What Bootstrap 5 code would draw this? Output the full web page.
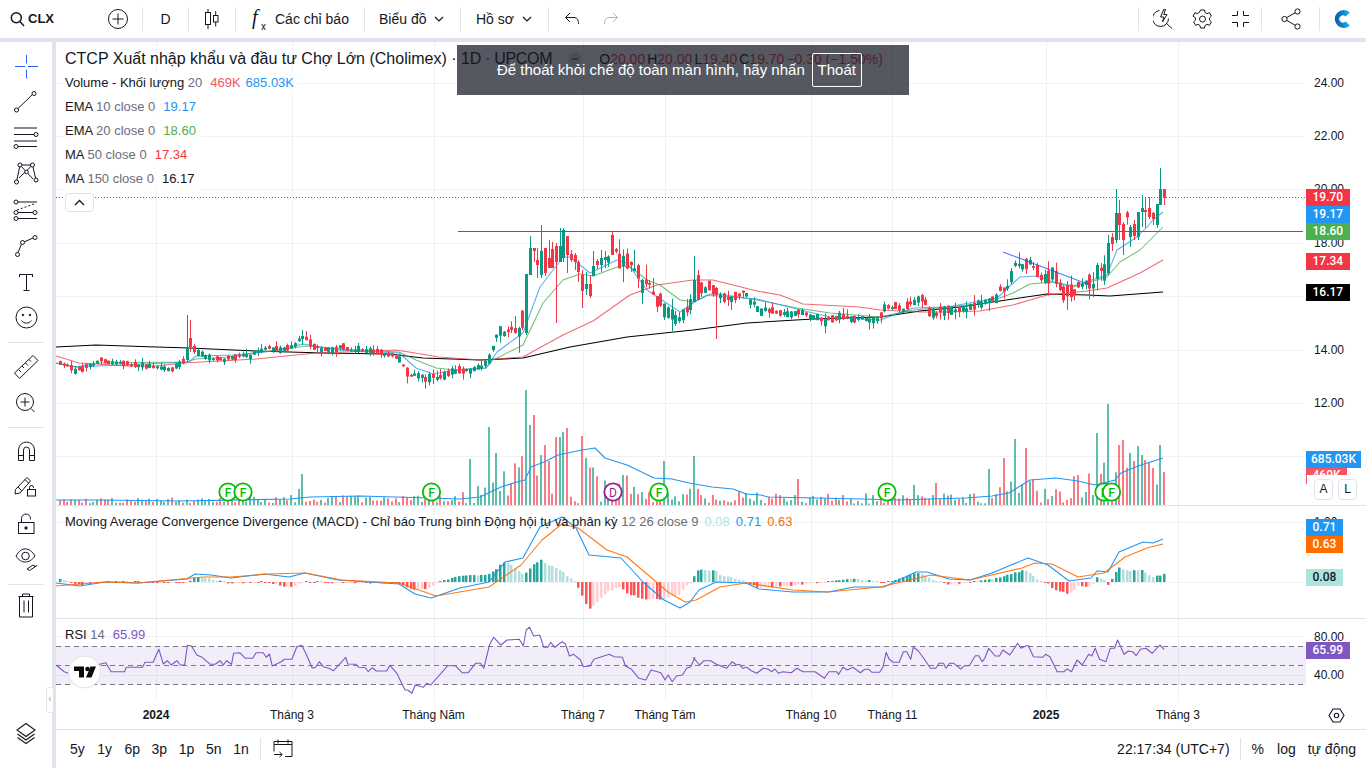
<!DOCTYPE html>
<html lang="vi">
<head>
<meta charset="utf-8">
<title>CLX</title>
<link href="https://cdn.jsdelivr.net/npm/bootstrap@5.3.0/dist/css/bootstrap.min.css" rel="stylesheet">
<style>
html,body{height:100%;margin:0;overflow:hidden;background:#E0E3EB;font-family:"Liberation Sans",Arial,sans-serif;color:#131722}
.topbar{height:38px;margin-bottom:4px;background:#fff;font-size:14px}
.tb-slot{height:38px;flex:none}
.tb-sep{width:1px;height:24px;background:#E0E3EB;flex:none}
.tb-sym{width:96px;padding-left:10px;gap:3px;font-weight:700;font-size:13px}
.tb-spacer{flex:1 1 auto}
.lefttools{width:52px;margin-right:4px;background:#fff;position:relative;flex:none;height:726px}
.lefttools svg{display:block;width:52px;height:726px}
.collapse-tab{position:absolute;left:46px;top:645px;width:8px;height:26px;background:#fff;border:1px solid #E0E3EB;border-radius:3px;font-size:10px;line-height:22px;text-align:center;color:#9598A1;overflow:hidden;z-index:3}
.workspace{width:1310px;flex:none;background:#fff;height:726px}
.pane{position:relative;width:1310px;display:flex}
.pane-main{height:463px}
.pane-macd{height:112px}
.pane-rsi{height:82px}
.rule{height:1px;background:#E0E3EB}
.plot{position:relative;width:1250px;flex:none;height:100%;overflow:hidden}
.plot>svg{display:block;position:absolute;left:0;top:0}
.axisbar{position:relative;width:60px;flex:none;height:100%;overflow:hidden;font-size:12px}
.axis-num{position:absolute;left:8px;line-height:16px;color:#131722}
.axis-tag{position:absolute;left:0;height:17px;line-height:17px;padding:0 6.5px;color:#fff;font-family:Roboto,sans-serif;font-weight:500;white-space:nowrap}
.axis-clip{height:8px;overflow:hidden;line-height:17px}
.legend-box{position:absolute;left:0;top:4px;padding-left:9px;font-size:13px;z-index:2}
.legend-row{height:24px;line-height:24px;white-space:nowrap;width:fit-content;padding-right:5px;background:rgba(255,255,255,.8);display:flex;gap:8px}
.legend-row .gr{color:#6A6D78}
.legend-tight{margin-left:-3px}
.legend-title{height:25px;font-size:16px;background:none;color:#131722;gap:0;align-items:center}
.title-tail{letter-spacing:-.3px}
.ohlc{font-size:14px;color:#131722;gap:0;display:inline-flex}
.ohlc b{font-weight:400;color:#F23645;margin-right:2px}
.ohlc-dot{width:14px;height:14px;border-radius:50%;background:#DADCE2;margin:0 17px 0 16px;flex:none;display:flex;align-items:center;justify-content:center}
.ohlc-dot::after{content:"";width:6px;height:2px;background:#787B86}
.legend-toggle{width:29px;height:19px;margin-top:2px;border:1px solid #E0E3EB;border-radius:4px;background:#fff;display:flex;align-items:center;justify-content:center}
.pane-legend{position:absolute;left:9px;top:4px;font-size:13px;white-space:nowrap;height:24px;line-height:24px;display:flex;gap:6px;z-index:2}
.pane-legend .gr{color:#6A6D78}
.pane-legend-rsi{gap:8px}
.toast-bar{position:absolute;left:401px;top:3px;width:452px;height:50px;background:rgba(19,23,34,.72);color:#fff;font-size:15px;z-index:5;padding-left:40px;gap:7px}
.toast-exit{width:50px;height:34px;padding:0;border:1px solid #fff;border-radius:2px;background:transparent;color:#fff;font-size:15px;line-height:32px}
.scale-btn{position:absolute;top:437px;width:19px;height:21px;background:#fff;border:1px solid #E0E3EB;border-radius:4px;font-size:12px;line-height:19px;text-align:center;color:#131722;z-index:3}
.timeaxis{position:relative;height:28px;font-size:12px;width:1310px}
.tick-lbl{position:absolute;top:6px;transform:translateX(-50%);line-height:16px;color:#131722;white-space:nowrap}
.tick-strong{font-weight:700}
.time-gear{position:absolute;left:1272px;top:6px}
.bottombar{height:38px;font-size:14px;padding:0 10px 0 14px;width:1310px}
.range-btn{width:27.2px;text-align:left;flex:none}
.range-last{width:26.8px}
.bb-sep{width:1px;height:22px;background:#E0E3EB;flex:none}
.bb-sep-r{margin:0 11px 0 10px}
.bb-cal{margin-left:12px}
.bb-log{margin-left:13px}
.bb-auto{margin-left:12px}
.legend-blue{color:#2196F3}.legend-green{color:#4CAF50}.legend-red{color:#F23645}.legend-pink{color:#F7525F}.legend-orange{color:#FF6D00}.legend-mint{color:#ACE5DC}.legend-purple{color:#7E57C2}
.tb-chevron{margin-left:8px}
</style>
</head>
<body>
<div class="topbar d-flex align-items-center">
  <div class="tb-slot tb-sym d-flex align-items-center">
    <svg width="15" height="16" viewBox="0 0 15 16" fill="none" stroke="#131722" stroke-width="1.5"><circle cx="6.3" cy="6.8" r="5"/><path d="M10 10.5l4 4.5"/></svg>
    <span>CLX</span>
  </div>
  <div class="tb-slot d-flex align-items-center" id="tbLeft"></div>
  <div class="tb-spacer"></div>
  <div class="tb-slot d-flex align-items-center" id="tbRight"></div>
</div>
<div class="d-flex">
  <div class="lefttools">
    <svg id="toolsSvg" viewBox="0 42 52 726" fill="none" stroke="#131722" stroke-width="1"></svg>
    <div class="collapse-tab">‹</div>
  </div>
  <div class="workspace">
    <div class="pane pane-main">
      <div class="plot">
        <svg id="svgMain" width="1250" height="463" viewBox="56 42 1250 463"></svg>
        <div class="legend-box">
          <div class="legend-row legend-title"><span>CTCP Xuất nhập khẩu và đầu tư Chợ Lớn (Cholimex) · <span class="title-tail">1D · UPCOM</span></span><span class="ohlc-dot"></span>
            <span class="ohlc"><span>O</span><b>20.00</b><span>H</span><b>20.00</b><span>L</span><b>19.40</b><span>C</span><b>19.70</b><b>−0.30 (−1.50%)</b></span></div>
          <div class="legend-row"><span>Volume - Khối lượng <span class="gr">20</span></span><span class="legend-pink">469K</span><span class="legend-blue legend-tight">685.03K</span></div>
          <div class="legend-row"><span>EMA <span class="gr">10 close 0</span></span><span class="legend-blue">19.17</span></div>
          <div class="legend-row"><span>EMA <span class="gr">20 close 0</span></span><span class="legend-green">18.60</span></div>
          <div class="legend-row"><span>MA <span class="gr">50 close 0</span></span><span class="legend-red">17.34</span></div>
          <div class="legend-row"><span>MA <span class="gr">150 close 0</span></span><span>16.17</span></div>
          <div class="legend-toggle"><svg width="11" height="7" viewBox="0 0 11 7" fill="none" stroke="#131722" stroke-width="1.3"><path d="M1 6l4.5-4.5L10 6"/></svg></div>
        </div>
        <div class="toast-bar d-flex align-items-center">
          <span>Để thoát khỏi chế độ toàn màn hình, hãy nhấn</span>
          <button type="button" class="btn toast-exit">Thoát</button>
        </div>
      </div>
      <div class="axisbar" id="axisMain"></div>
    </div>
    <div class="rule"></div>
    <div class="pane pane-macd">
      <div class="plot">
        <svg id="svgMacd" width="1250" height="112" viewBox="56 506 1250 112"></svg>
        <div class="pane-legend"><span>Moving Average Convergence Divergence (MACD) - Chỉ báo Trung bình Động hội tụ và phân kỳ <span class="gr">12 26 close 9</span></span><span class="legend-mint">0.08</span><span class="legend-blue">0.71</span><span class="legend-orange">0.63</span></div>
      </div>
      <div class="axisbar" id="axisMacd"></div>
    </div>
    <div class="rule"></div>
    <div class="pane pane-rsi">
      <div class="plot">
        <svg id="svgRsi" width="1250" height="82" viewBox="56 619 1250 82"></svg>
        <div class="pane-legend pane-legend-rsi"><span>RSI <span class="gr">14</span></span><span class="legend-purple">65.99</span></div>
      </div>
      <div class="axisbar" id="axisRsi"></div>
    </div>
    <div class="timeaxis" id="timeAxis">
      <svg class="time-gear" width="17" height="17" viewBox="0 0 17 17" fill="none" stroke="#131722" stroke-width="1.1"><path d="M5 2h7l4 6.5-4 6.5H5L1 8.5z"/><circle cx="8.5" cy="8.5" r="2.2"/></svg>
    </div>
    <div class="rule"></div>
    <div class="bottombar d-flex align-items-center">
      <span class="range-btn">5y</span><span class="range-btn">1y</span><span class="range-btn">6p</span><span class="range-btn">3p</span><span class="range-btn">1p</span><span class="range-btn">5n</span><span class="range-btn range-last">1n</span>
      <div class="bb-sep"></div>
      <svg class="bb-cal" width="20" height="20" viewBox="0 0 20 20" fill="none" stroke="#131722" stroke-width="1"><path d="M1 5.5h18M1 5.5V2.500h18v15h-7M5 .5v4M15 .5v4M1 5.500v7M1 15.500h8M6.500 13l2.700 2.500-2.700 2.500"/></svg>
      <div class="flex-grow-1"></div>
      <span>22:17:34 (UTC+7)</span>
      <div class="bb-sep bb-sep-r"></div>
      <span>%</span><span class="bb-log">log</span><span class="bb-auto">tự động</span>
    </div>
  </div>
</div>
<script>
(function(){
const $=id=>document.getElementById(id);
/* top bar */
const S='fill="none" stroke="#131722" stroke-width="1"';
let h='';
const sep='<div class="tb-sep"></div>';
const slot=(w,inner,extra)=>`<div class="tb-slot d-flex align-items-center justify-content-center" style="width:${w}px;${extra||''}">${inner}</div>`;
h+=slot(44,`<svg width="22" height="22" viewBox="0 0 22 22" ${S}><circle cx="11" cy="11" r="9.5"/><path d="M11 5.5v11M5.5 11h11"/></svg>`);
h+='<div style="width:2px"></div>'+sep;
h+=slot(45,'<span>D</span>')+sep;
h+=slot(46,`<svg width="14" height="20" viewBox="0 0 14 20" ${S}><rect x=".5" y="3.5" width="5" height="12"/><path d="M3 0v3.5M3 15.5V20"/><rect x="8.5" y="6.5" width="4.5" height="6.5"/><path d="M10.7 2v4.5M10.7 13v4.5"/></svg>`)+sep;
h+=`<div class="tb-slot d-flex align-items-center" style="width:128px;padding-left:15px"><svg width="24" height="26" viewBox="0 0 24 26"><text x="1" y="18" font-family="Liberation Serif,serif" font-style="italic" font-size="20" fill="#131722">f</text><text x="10" y="24" font-family="Roboto,sans-serif" font-size="10" fill="#131722">x</text></svg><span>Các chỉ báo</span></div>`+sep;
const chev=`<svg class="tb-chevron" width="10" height="6" viewBox="0 0 10 6" fill="none" stroke="#131722" stroke-width="1.2"><path d="M1 1l4 4 4-4"/></svg>`;
h+=`<div class="tb-slot d-flex align-items-center" style="width:95px;padding-left:14px"><span>Biểu đồ</span>${chev}</div>`+sep;
h+=`<div class="tb-slot d-flex align-items-center" style="width:87px;padding-left:15px"><span>Hồ sơ</span>${chev}</div>`+sep;
h+=slot(45,`<svg width="16" height="14" viewBox="0 0 16 14" ${S}><path d="M6 1L1.5 5.5 6 10M1.5 5.5H10c3 0 4.5 2.5 4.5 6.5"/></svg>`);
h+=slot(33,`<svg width="16" height="14" viewBox="0 0 16 14" fill="none" stroke="#B2B5BE" stroke-width="1"><path d="M10 1l4.5 4.500L10 10M14.500 5.500H6c-3 0-4.500 2.500-4.500 6.500"/></svg>`);
$('tbLeft').innerHTML=h;
const gear=`<svg width="21" height="21" viewBox="0 0 21 21" ${S}><path d="M8.500 1h4l.6 2.600 1.800 1 2.500-.9 2 3.400-1.900 1.800v2.200l1.900 1.800-2 3.400-2.500-.9-1.800 1-.6 2.600h-4l-.6-2.600-1.800-1-2.500.9-2-3.400 1.900-1.800V8.900L1 7.100l2-3.400 2.500.9 1.800-1z"/><circle cx="10.500" cy="10" r="3"/></svg>`;
let r=sep;
r+=slot(46,`<svg width="20" height="20" viewBox="0 0 20 20" ${S}><path d="M6.500 1.500a8 8 0 1 0 9 8"/><path d="M11 0L7.500 8h3.300L9.500 13l4.500-7.500h-3.200L12.500 0zM13.500 14.500l5.500 5"/></svg>`,'padding-left:2px');
r+=slot(34,gear);
r+=slot(42,`<svg width="17" height="16" viewBox="0 0 17 16" ${S}><path d="M5.500 0v4.500H0M11.500 0v4.500H17M5.500 16v-4.500H0M11.500 16v-4.500H17"/></svg>`);
r+=sep;
r+=slot(57,`<svg width="20" height="22" viewBox="0 0 20 22" ${S}><circle cx="16.5" cy="3.5" r="2.6"/><circle cx="3.5" cy="11" r="2.6"/><circle cx="16.5" cy="18.5" r="2.6"/><path d="M6 9.5l8.2-4.8M6 12.5l8.2 4.8"/></svg>`);
r+=sep;
r+=`<div class="tb-slot d-flex align-items-center justify-content-center" style="width:46px;padding-right:4px"><svg width="22" height="24" viewBox="0 0 22 24"><defs><linearGradient id="lg" x1="0" x2="1"><stop offset="0" stop-color="#0B5CA8"/><stop offset=".55" stop-color="#0E86CE"/><stop offset="1" stop-color="#1CC4EA"/></linearGradient></defs><path d="M20 5.5A9 9 0 1 0 20 18.5L15.5 14.5A3.6 3.6 0 1 1 15.5 9.5Z" fill="url(#lg)"/></svg></div>`;
$('tbRight').innerHTML=r;

/* left tools */
let t='';
const c=(x,y,rr)=>`<circle cx="${x}" cy="${y}" r="${rr||2}" fill="#fff"/>`;
t+=`<path stroke="#2962FF" d="M15 66.500h10M28 66.500h10M26.500 55v8.500M26.500 69.500v9"/>`;
t+=`<path d="M17.500 109L32 95"/>${c(16.5,110)}${c(34,93.5)}`;
t+=`<path stroke-width="1.2" d="M14 128h23M14 134.500h20M14 141h23M18 146.500h19"/>${c(36,134.5)}${c(16,146.5)}`;
t+=`<path d="M16.500 182L20 165M20 165L33 179M32.500 165L19 178M32.500 165L36 180M20 165L32.500 165"/>${c(20,165)}${c(32.5,165)}${c(16.5,182)}${c(36,180)}${c(26.5,172,1.8)}`;
t+=`<path d="M14 202h23M14 212.500h23M14 218.500h23"/><path d="M17 210L34 204" stroke-dasharray="2 2"/>${c(16,202)}${c(16,212.5)}${c(35,212.5)}${c(16,218.5)}`;
t+=`<path d="M18 252.500L21.500 244M24 242L33 238"/>${c(17.5,254.5)}${c(22.5,242.5)}${c(35,237.5)}`;
t+=`<path d="M19 274.500h14M26.500 274.500v16M23.500 290.500h6"/><path d="M19.500 274.500v2.500M32.500 274.500v2.500"/>`;
t+=`<circle cx="26.500" cy="317.500" r="10.500"/><circle cx="23" cy="315" r=".8" fill="#131722"/><circle cx="30" cy="315" r=".8" fill="#131722"/><path d="M21.500 320.500c2.500 3.500 7.500 3.500 10 0"/>`;
t+=`<path stroke="#E0E3EB" d="M8 342.500h36M8 427.500h36M8 584.500h36"/>`;
t+=`<path d="M14.500 373L33 355.500l5 5L19.500 378.500zM18.500 369.500l2.500 2.500M22 366l2 2M25.500 363l2.500 2.500M29 359.500l2 2"/>`;
t+=`<circle cx="25" cy="402" r="8.500"/><path d="M25 397.500v9M20.500 402h9M31 408.500l3.500 3.500"/>`;
t+=`<path d="M18.500 460.500V450a8 8 0 0 1 16 0v10.500h-5V450a3 3 0 0 0-6 0v10.500zM18.500 455.500h5M29.500 455.500h5"/>`;
t+=`<path d="M15.500 489.500L27 477.500l3.500 3.500L20 493l-5 1zM25 479.500l3.500 3.500M18 487l3.500 3.500"/><rect x="27.500" y="489.500" width="8" height="6.500" fill="#fff"/><path d="M29.500 489.500v-2a2 2 0 0 1 4 0v.5"/>`;
t+=`<rect x="18.500" y="522.500" width="15.500" height="11"/><path d="M21.500 522.500v-4a4.500 4.500 0 0 1 9 0v1"/><circle cx="26" cy="528" r="1.200" fill="#131722"/>`;
t+=`<path d="M16 556c5-9.500 13.500-9.500 19 0-5.500 8-14 8-19 0z"/><circle cx="25.500" cy="556" r="3.800"/><path d="M27 569l6-4 2.500 1.500-6 4zM34 567l3-1.500"/>`;
t+=`<path d="M18.500 596.500h15M22.500 596.500v-2.500h7v2.500M19.500 596.500V617h13V596.500M24 600.500v12M28.500 600.500v12"/>`;
t+=`<path d="M26 723.500L35 730l-9 6.500-9-6.500zM17.500 734l8.500 6 8.500-6M17.500 737.500l8.500 6 8.500-6" stroke-width="1.1"/>`;
$('toolsSvg').innerHTML=t;

/* data */
const center=[[56,362],[66,365],[75,371],[88,366],[95,363],[100,360],[110,364],[118,362],[128,364],[140,365],[155,367],[170,370],[180,365],[188,355],[192,345],[200,354],[210,358],[220,360],[230,358],[240,356],[250,356],[260,350],[270,348],[280,350],[290,347],[300,340],[304,337],[310,343],[320,350],[330,350],[340,347],[350,350],[360,350],[370,352],[380,353],[390,355],[400,360],[405,370],[412,376],[420,378],[430,378],[440,376],[450,372],[460,370],[470,370],[480,368],[490,358],[495,338],[502,332],[510,330],[520,328],[526,305],[530,260],[540,262],[545,262],[552,268],[556,256],[560,250],[564,240],[568,245],[572,250],[576,258],[580,263],[585,265],[590,265],[595,285],[600,285],[605,265],[610,262],[612,245],[618,255],[622,263],[628,262],[632,265],[636,270],[640,282],[645,285],[650,285],[655,305],[660,300],[665,310],[670,312],[675,320],[680,322],[685,312],[690,305],[695,288],[698,285],[702,290],[706,290],[712,285],[716,295],[720,295],[725,298],[730,299],[735,295],[740,294],[745,293],[750,300],[755,305],[760,312],[765,310],[770,310],[775,312],[780,312],[785,312],[790,315],[795,312],[800,312],[805,315],[810,316],[815,316],[820,318],[825,322],[830,318],[840,316],[850,318],[860,319],[870,320],[880,318],[885,306],[890,308],[895,307],[900,310],[905,309],[910,304],[915,300],[920,298],[925,302],[930,312],[935,313],[940,310],[950,310],[960,308],[970,308],[980,303],[985,302],[990,298],[995,298],[1000,291],[1005,290],[1010,280],[1015,265],[1020,266],[1025,265],[1030,262],[1035,270],[1040,275],[1045,278],[1050,277],[1055,275],[1058,280],[1062,290],[1068,291],[1075,291],[1080,285],[1085,280],[1090,282],[1094,283],[1097,270],[1100,270],[1103,268],[1106,275],[1110,260],[1113,240],[1117,225],[1164,197]];
const ma150=[[56,347],[96,345],[156,347],[189,348],[256,351],[323,353],[389,354],[423,358],[480,360],[523,358],[570,347],[627,337],[693,330],[747,323],[813,319],[880,317],[920,311],[960,307],[1013,299],[1047,294],[1087,295],[1110,296],[1163,292]];
const ma50=[[56,356],[79,363],[129,366],[156,366],[183,363],[256,359],[316,353],[396,350],[409,352],[439,357],[480,360],[523,357],[563,335],[593,321],[630,295],[657,285],[693,280],[713,280],[757,291],[780,295],[803,304],[860,307],[880,310],[920,312],[947,312],[980,311],[1013,305],[1047,295],[1087,291],[1107,288],[1140,273],[1163,260]];
const ema20=[[56,363],[76,367],[96,363],[186,362],[196,359],[229,357],[263,352],[306,346],[339,349],[399,352],[416,360],[436,368],[456,370],[486,368],[493,360],[523,345],[543,303],[563,280],[580,274],[593,276],[620,266],[630,267],[647,280],[660,285],[680,300],[693,302],[713,293],[757,300],[797,308],[830,313],[880,317],[913,310],[947,307],[987,303],[1013,293],[1030,284],[1053,282],[1073,287],[1107,277],[1120,262],[1140,250],[1153,237],[1163,227]];
const ema10=[[56,363],[76,367],[189,362],[196,356],[233,355],[273,351],[303,344],[339,350],[399,353],[416,368],[433,374],[456,370],[486,368],[497,352],[523,333],[540,287],[563,257],[570,257],[590,273],[617,260],[627,263],[647,290],[680,312],[693,303],[707,295],[757,299],[813,313],[830,317],[880,320],[913,308],[947,307],[997,298],[1020,277],[1037,276],[1053,282],[1073,286],[1107,275],[1117,250],[1137,237],[1147,227],[1153,220],[1163,212]];
const volMA=[[56,500],[100,500],[180,501],[290,499],[310,497],[360,496],[430,498],[460,499],[480,497],[501,487],[517,482],[525,480],[531,467],[544,462],[558,455],[582,450],[595,448],[605,458],[627,465],[654,478],[672,479],[689,483],[712,487],[733,489],[746,494],[761,495],[768,497],[862,499],[897,500],[966,498],[992,496],[1009,493],[1030,480],[1056,478],[1078,481],[1095,485],[1115,480],[1121,473],[1138,466],[1163,458]];
const macd=[[56,583],[80,586],[105,582],[138,583],[187,579],[195,574],[211,575],[231,578],[264,574],[289,577],[305,573],[338,580],[399,584],[415,594],[431,598],[460,588],[489,582],[505,562],[523,558],[540,527],[562,517],[576,528],[589,555],[621,558],[644,583],[664,600],[680,608],[690,602],[699,590],[716,582],[746,583],[759,589],[793,592],[828,592],[854,587],[884,587],[916,572],[927,572],[949,579],[970,580],[992,573],[1028,558],[1048,565],[1069,581],[1091,578],[1097,571],[1108,572],[1119,552],[1143,542],[1153,543],[1163,539]];
const signal=[[56,586],[105,582],[138,583],[203,577],[231,577],[268,574],[305,573],[342,580],[399,583],[436,596],[489,587],[521,565],[542,540],[562,524],[578,528],[607,550],[627,557],[668,592],[685,602],[696,600],[720,587],[746,583],[793,590],[828,592],[880,587],[931,575],[970,580],[1022,568],[1035,563],[1052,564],[1078,577],[1104,573],[1125,557],[1147,548],[1163,544]];
const rsiA=[[0,135],[20,155],[30,160],[100,135],[122,128],[135,155],[168,155],[172,142],[212,142],[218,127],[238,127],[252,88],[263,132],[273,122],[282,135],[296,122],[305,135],[315,135],[322,76],[332,78],[345,105],[358,112],[378,133],[390,133],[402,122],[410,135],[418,122],[430,133],[435,100],[450,98],[464,115],[482,115],[490,98],[508,98],[515,112],[523,102],[530,138],[552,125],[560,118],[578,118],[590,80],[602,76],[612,100],[628,145],[636,142],[645,125],[655,140],[668,145],[680,152],[710,112],[715,132],[735,133],[742,142],[758,143],[765,155],[775,143],[785,153],[810,153],[818,136],[835,160],[855,210],[862,210],[872,220],[880,195],[900,202],[908,190],[918,195],[960,137],[978,137],[995,158],[1010,158],[1028,130],[1040,130],[1048,145],[1062,75],[1072,52],[1090,75],[1105,60],[1135,58],[1145,78],[1152,30],[1160,22],[1170,48],[1185,45],[1195,82],[1205,82],[1212,67],[1222,82],[1240,65],[1248,72],[1258,108],[1268,103],[1285,120],[1292,140],[1308,138],[1318,118],[1355,103],[1368,110],[1388,112],[1395,138],[1410,148],[1428,175],[1445,180],[1458,150],[1482,158],[1492,180],[1500,165],[1510,185],[1520,168],[1535,165],[1545,145],[1555,140],[1565,113]].map(p=>[56+p[0]/2.45,620+p[1]/3]);
const rsiB=[[8,113],[22,135],[32,122],[48,122],[60,132],[85,145],[98,125],[108,135],[115,133],[122,145],[132,142],[142,152],[155,160],[170,145],[180,147],[190,155],[197,147],[205,160],[215,155],[235,158],[248,145],[262,155],[290,155],[312,175],[322,155],[340,155],[345,163],[355,142],[365,150],[378,142],[395,158],[405,148],[415,148],[422,157],[440,157],[448,140],[455,97],[462,118],[472,127],[485,127],[495,95],[503,95],[512,118],[518,82],[530,93],[542,115],[558,145],[570,145],[578,130],[588,130],[594,145],[602,130],[612,130],[628,147],[637,137],[648,137],[662,107],[670,107],[678,125],[684,115],[693,85],[708,108],[718,108],[726,90],[742,105],[760,70],[768,85],[780,77],[785,77],[797,110],[818,112],[825,103],[835,110],[852,155],[868,155],[875,147],[885,155],[898,120],[910,135],[925,103],[932,108],[940,85],[950,118],[965,125],[975,85],[985,85],[992,60],[1007,103],[1017,93],[1027,95],[1035,107],[1045,88],[1058,85],[1072,100],[1090,75],[1100,88]].map(p=>[690+p[0]/2.32,620+p[1]/3]);
const rsi=rsiA.concat(rsiB);

let seed=20240102;
const rnd=()=>{seed|=0;seed=seed+0x6D2B79F5|0;let z=Math.imul(seed^seed>>>15,1|seed);z=z+Math.imul(z^z>>>7,61|z)^z;return((z^z>>>14)>>>0)/4294967296};
const at=(arr,x)=>{if(x<=arr[0][0])return arr[0][1];for(let i=1;i<arr.length;i++){if(x<=arr[i][0]){const a=arr[i-1],b=arr[i];return a[1]+(b[1]-a[1])*(x-a[0])/(b[0]-a[0]);}}return arr[arr.length-1][1]};
const pts=a=>a.map(p=>p[0].toFixed(1)+','+p[1].toFixed(1)).join(' ');
const line=(a,col,w,extra)=>`<polyline points="${pts(a)}" fill="none" stroke="${col}" stroke-width="${w}" stroke-linejoin="round" ${extra||''}/>`;
const xs=[];for(let i=0;i<297;i++)xs.unshift(Math.round(1164-3.73*i));
const env=[[56,5],[280,7],[300,10],[440,9],[470,16],[495,26],[525,50],[600,50],[640,24],[720,16],[800,10],[990,10],[1010,30],[1090,30],[1100,48],[1164,44]];
const volat=[[56,2.6],[180,3],[300,3.6],[400,3.2],[410,5.5],[480,3.4],[495,6.5],[525,11],[610,11],[660,10],[700,7],[800,4],[880,3.6],[920,5],[1000,6],[1060,8],[1100,11],[1164,12]];
const fixed=[[188,315,362,347,360,1],[191,320,352,338,347,0],[195,344,354,346,352,0],[302,323,343,337,345,1],[304,330,345,336,339,1],[526,274,335,274,333,1],[530,236,275,248,275,1],[534,248,262,248,251,0],[538,248,278,260,265,0],[541,225,278,251,275,1],[544,248,276,248,273,0],[549,240,268,258,268,0],[552,242,265,249,268,0],[555,243,323,246,262,0],[559,228,262,246,262,1],[563,228,262,230,258,1],[566,212,262,230,237,0],[569,236,273,236,255,0],[573,250,262,254,260,0],[576,253,270,255,262,0],[579,260,282,262,272,0],[583,270,308,275,291,0],[586,272,295,284,289,1],[590,275,298,284,296,0],[594,251,275,266,276,1],[598,259,269,261,265,0],[601,250,272,258,265,1],[605,251,268,257,260,1],[612,232,255,235,255,0],[697,270,300,275,300,0],[694,256,302,280,302,1],[716,287,339,288,295,0],[1110,235,275,243,273,1],[1113.500,233,251,237,244,0],[1117,189,243,213,240,1],[1121,200,240,213,225,0],[1125,222,255,224,240,0],[1129,225,247,227,237,1],[1133,225,239,227,232,1],[1136,220,240,224,236,0],[1140,212,240,212,237,1],[1142,195,227,208,212,1],[1146,197,228,210,212,0],[1149,197,219,208,217,0],[1153,212,225,213,219,0],[1157,204,228,204,225,1],[1161,168,205,189,205,1],[1164,189,205,189,198,0]];
const cand=[];
xs.forEach((x,i)=>{
  const ctr=at(center,x)+(rnd()-.5)*at(volat,x)*.8;
  const next=at(center,x+4);
  const v=at(volat,x);
  const half=.8+rnd()*v*.75;
  const up=rnd()<(next<ctr?.7:.35)?1:0;
  const top=ctr-half,bot=ctr+half;
  const hi=top-rnd()*rnd()*v*2,lo=bot+rnd()*rnd()*v*2;
  cand.push({x,hi,lo,top,bot,up});
});
fixed.forEach(f=>{
  let best=0,d=1e9;cand.forEach((k,i)=>{const dd=Math.abs(k.x-f[0]);if(dd<d){d=dd;best=i}});
  const k=cand[best];k.hi=f[1];k.lo=f[2];k.top=f[3];k.bot=f[4];k.up=f[5];
});
const UP='#089981',DN='#F23645';
const vgrid=[156,292,434,583,665,811,892,1046,1178];
const vg=(y1,y2)=>vgrid.map(x=>`<rect x="${x}" y="${y1}" width="1" height="${y2-y1}" fill="#F0F1F5"/>`).join('');
const hg=ys=>ys.map(y=>`<rect x="56" y="${y}" width="1248" height="1" fill="#F0F1F5"/>`).join('');
const volFix=[[526,390],[529,425],[534,415],[490,427],[472,459],[495,453],[302,474],[298,489],[583,436],[569,428],[565,432],[560,437],[556,437],[548,461],[541,455],[544,445],[666,461],[694,456],[1110,404],[1096,433],[1118,425],[1124,440],[1120,445],[1017,439],[1003,458],[1025,448],[990,469],[1139,446],[1160,445],[1143,455],[1150,463],[1155,468],[1164,472],[797,479],[935,483],[915,485],[1146,460],[1129,453],[1134,461]];
const vols=cand.map(k=>{const e=at(env,k.x);return {x:k.x,h:1.5+rnd()*e,up:k.up}});
volFix.forEach(f=>{let b=0,d=1e9;vols.forEach((k,i)=>{const dd=Math.abs(k.x-f[0]);if(dd<d){d=dd;b=i}});vols[b].h=505-f[1];});
let m=vg(42,505)+hg([83,136,189,243,296,350,403,456]);
vols.forEach(v=>{m+=`<rect x="${v.x-1}" y="${(505-v.h).toFixed(1)}" width="2" height="${v.h.toFixed(1)}" fill="${v.up?UP:DN}" fill-opacity=".65"/>`});
m+=line(volMA,'#2196F3',1.1);
m+=line(ma150,'#000',1.05)+line(ma50,DN,1.05,'stroke-opacity=".75"')+line(ema20,'#4CAF50',1.05,'stroke-opacity=".8"')+line(ema10,'#2196F3',1.05,'stroke-opacity=".75"');
cand.forEach(k=>{const col=k.up?UP:DN;
 m+=`<rect x="${k.x}" y="${k.hi.toFixed(1)}" width="1" height="${(k.lo-k.hi).toFixed(1)}" fill="${col}"/><rect x="${k.x-1}" y="${k.top.toFixed(1)}" width="3" height="${Math.max(1,k.bot-k.top).toFixed(1)}" fill="${col}"/>`;});
m+=`<line x1="458" y1="231.500" x2="1303" y2="231.500" stroke="#2962FF" stroke-width="1"/>`;
m+=`<line x1="1003" y1="252" x2="1090" y2="285" stroke="#2962FF" stroke-width="1.200" stroke-opacity=".8"/>`;
m+=`<line x1="56" y1="197.500" x2="1306" y2="197.500" stroke="#F23645" stroke-width="1" stroke-dasharray="1 2"/>`;
const marks=[[228,'F'],[243,'F'],[431.5,'F'],[613,'D'],[659,'F'],[887,'F'],[1104,'F'],[1111.5,'F']];
marks.forEach(p=>{const col=p[1]==='D'?'#9C1E8C':'#00C000';
 m+=`<circle cx="${p[0]}" cy="492" r="8.700" fill="#fff" stroke="${col}" stroke-width="1.800"/><text x="${p[0]}" y="496.500" text-anchor="middle" font-family="Roboto,sans-serif" font-size="12" font-weight="${p[1]==='D'?400:500}" fill="${col}">${p[1]}</text>`;});
$('svgMain').innerHTML=m;
let q=vg(506,618)+hg([522,582]);
let prev=0;
cand.forEach(k=>{let d=(at(signal,k.x)-at(macd,k.x))*1.5+(rnd()-.5)*1.2;
 const rising=d>prev;const col=d>=0?(rising?'#26A69A':'#B2DFDB'):(rising?'#FFCDD2':'#FF5252');prev=d;
 const hh=Math.max(1,Math.abs(d));
 q+=`<rect x="${k.x-1}" y="${(d>=0?582-hh:582).toFixed(1)}" width="2.500" height="${hh.toFixed(1)}" fill="${col}"/>`;});
q+=line(macd,'#2196F3',1.1)+line(signal,'#FF6D00',1.1,'stroke-opacity=".9"');
$('svgMacd').innerHTML=q;
let w=vg(619,701)+hg([636,675]);
w+=`<rect x="56" y="646" width="1250" height="38.500" fill="#7E57C2" fill-opacity=".1"/>`;
[646.5,665.5,684.5].forEach(y=>{w+=`<line x1="56" x2="1306" y1="${y}" y2="${y}" stroke="#787B86" stroke-width="1" stroke-dasharray="5 4"/>`});
w+=line(rsi,'#7E57C2',1.1);
w+=`<circle cx="84.500" cy="672" r="16" fill="#fff" stroke="#E0E3EB"/><path d="M74 666.500h10v11h-5v-6.500h-5zM96 666.500l-4.500 11h-5.500l4.500-11z" fill="#0A0A0A"/><circle cx="87.500" cy="669" r="2.300" fill="#0A0A0A"/>`;
$('svgRsi').innerHTML=w;
const num=(y,s)=>`<div class="axis-num" style="top:${y-8}px">${s}</div>`;
const tag=(y,s,bg,fg)=>`<div class="axis-tag" style="top:${y}px;background:${bg};${fg?'color:'+fg:''}">${s}</div>`;
let am='';
[[83,'24.00'],[136,'22.00'],[189,'20.00'],[243,'18.00'],[296,'16.00'],[350,'14.00'],[403,'12.00']].forEach(a=>am+=num(a[0]-42,a[1]));
am+=tag(147,'19.70','#F23645')+tag(164,'19.17','#2196F3')+tag(181,'18.60','#4CAF50')+tag(210.5,'17.34','#F23645')+tag(242,'16.17','#000');
am+=`<div class="axis-tag axis-clip" style="top:425px;background:#F7525F">469K</div><div class="axis-tag" style="top:409px;background:#2196F3;padding:0 5px">685.03K</div>`;
am+=`<div style="position:absolute;left:0;top:433px;width:1px;height:9px;background:#F7525F"></div>`;
am+=`<div class="scale-btn" style="left:8px">A</div><div class="scale-btn" style="left:32px">L</div>`;
$('axisMain').innerHTML=am;
$('axisMacd').innerHTML=num(16,'1.00')+tag(13,'0.71','#2196F3')+tag(30,'0.63','#FF6D00')+tag(63,'0.08','#ACE5DC','#131722');
$('axisRsi').innerHTML=num(17.5,'80.00')+num(56,'40.00')+tag(23,'65.99','#7E57C2');
let ta='';
[[100,'2024',1],[236,'Tháng 3'],[377.5,'Tháng Năm'],[527,'Tháng 7'],[609,'Tháng Tám'],[755,'Tháng 10'],[836.5,'Tháng 11'],[990,'2025',1],[1122,'Tháng 3']].forEach(a=>{ta+=`<span class="tick-lbl${a[2]?' tick-strong':''}" style="left:${a[0]}px">${a[1]}</span>`});
$('timeAxis').insertAdjacentHTML('beforeend',ta);
})();
</script>
<script src="https://cdn.jsdelivr.net/npm/bootstrap@5.3.0/dist/js/bootstrap.bundle.min.js"></script>
</body>
</html>
